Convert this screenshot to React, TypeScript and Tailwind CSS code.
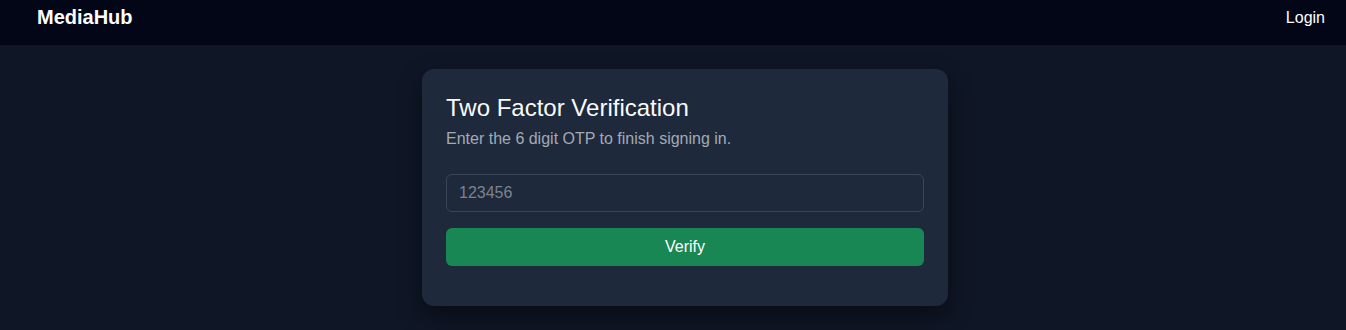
import React from "react";

const App = () => {
    return (
        <div className="min-h-screen bg-[#0f1626] text-white font-['Liberation_Sans',Arial,sans-serif]">
            {/** 상단 네비게이션 */}
            <nav className="flex justify-between items-start h-[45px] bg-[#020617] pl-[37px] pr-[21px] pt-[5px]">
                <span className="text-[20px] font-bold leading-[24px]">MediaHub</span>
                <span className="text-[16px] leading-[24px] mt-[1px]">Login</span>
            </nav>

            {/** 인증 카드 */}
            <div className="flex justify-center pt-[24px] pl-[24px]">
                <div className="w-[526px] bg-[#1e293b] rounded-[12px] p-[24px] pb-[40px] shadow-[0_10px_25px_rgba(0,0,0,0.45)]">
                    <h1 className="text-[24px] leading-[29px] text-[#f8fafc]">Two Factor Verification</h1>
                    <p className="text-[16px] leading-[24px] text-[#a3aab5] mt-[5px]">
                        Enter the 6 digit OTP to finish signing in.
                    </p>
                    <input
                        type="text"
                        placeholder="123456"
                        className="block w-full h-[38px] mt-[23px] px-[12px] bg-[#1e293b] border border-[#3a4556] rounded-[6px] text-[16px] text-white placeholder:text-[#7b8391] outline-none"
                    />
                    <button className="block w-full h-[38px] mt-[16px] bg-[#198754] rounded-[6px] text-[16px] text-white">
                        Verify
                    </button>
                </div>
            </div>
        </div>
    );
};

export default App;
